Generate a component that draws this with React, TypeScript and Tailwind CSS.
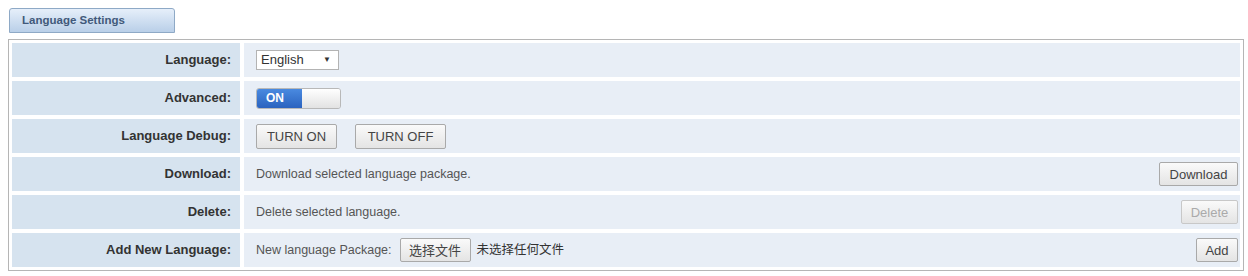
import React from 'react';

const font = { fontFamily: '"Liberation Sans", Arial, "Noto Sans CJK SC", sans-serif' };

function Row({ label, children }: { label: string; children: React.ReactNode }) {
  return (
    <div className="grid grid-cols-[228px_1fr] gap-[4px] h-[34px]">
      <div className="bg-[#d6e3ef] flex items-center justify-end pr-[9px] text-[13px] font-bold text-[#333]">
        {label}
      </div>
      <div className="bg-[#e8eef6] flex items-center pl-[12px] pr-[2px] text-[12.5px] text-[#555]">
        {children}
      </div>
    </div>
  );
}

const btn =
  'h-[24px] px-[6px] border border-[#a9a9a9] rounded-[2px] bg-gradient-to-b from-[#fafafa] to-[#e4e4e4] text-[13px] text-[#444] leading-none';

export default function App() {
  return (
    <div className="w-[1248px] h-[276px] bg-white pt-[8px]" style={font}>
      <div className="ml-[9px] w-[166px] h-[25px] rounded-t-[3px] border border-[#8ea9c6] bg-gradient-to-b from-[#e6effa] to-[#b9cfe8] flex items-center pl-[12px] text-[11.5px] font-bold text-[#41597a]">
        Language Settings
      </div>
      <div className="mt-[6px] ml-[8px] w-[1236px] border border-[#b5b5b5] p-[3px] flex flex-col gap-[4px]">
        <Row label="Language:">
          <div className="w-[83px] h-[20px] bg-white border border-[#b3b3b3] flex items-center justify-between pl-[4px] pr-[7px] text-[13px] text-[#333]">
            <span>English</span>
            <span className="text-[8px]">▼</span>
          </div>
        </Row>
        <Row label="Advanced:">
          <div className="w-[85px] h-[21px] rounded-[3px] border border-[#b8b8b8] flex overflow-hidden">
            <div className="w-[45px] bg-gradient-to-b from-[#4a8ae0] to-[#2b63bf] text-white text-[12px] font-bold flex items-center pl-[9px]">
              ON
            </div>
            <div className="flex-1 bg-gradient-to-b from-[#ffffff] to-[#e2e2e2]" />
          </div>
        </Row>
        <Row label="Language Debug:">
          <div className="flex gap-[18px]">
            <button className={`${btn} w-[81px] h-[25px]`}>TURN ON</button>
            <button className={`${btn} w-[91px] h-[25px]`}>TURN OFF</button>
          </div>
        </Row>
        <Row label="Download:">
          <span className="flex-1">Download selected language package.</span>
          <button className={`${btn} w-[79px]`}>Download</button>
        </Row>
        <Row label="Delete:">
          <span className="flex-1">Delete selected language.</span>
          <button className={`${btn} w-[57px] text-[#aaa] border-[#c8c8c8]`}>Delete</button>
        </Row>
        <Row label="Add New Language:">
          <span className="flex-1 flex items-center">
            New language Package:
            <button className={`${btn} ml-[8px] w-[71px] h-[22px] text-[12.5px]`}>选择文件</button>
            <span className="ml-[6px] text-[12.5px] text-[#333]">未选择任何文件</span>
          </span>
          <button className={`${btn} w-[42px] h-[21px]`}>Add</button>
        </Row>
      </div>
    </div>
  );
}
